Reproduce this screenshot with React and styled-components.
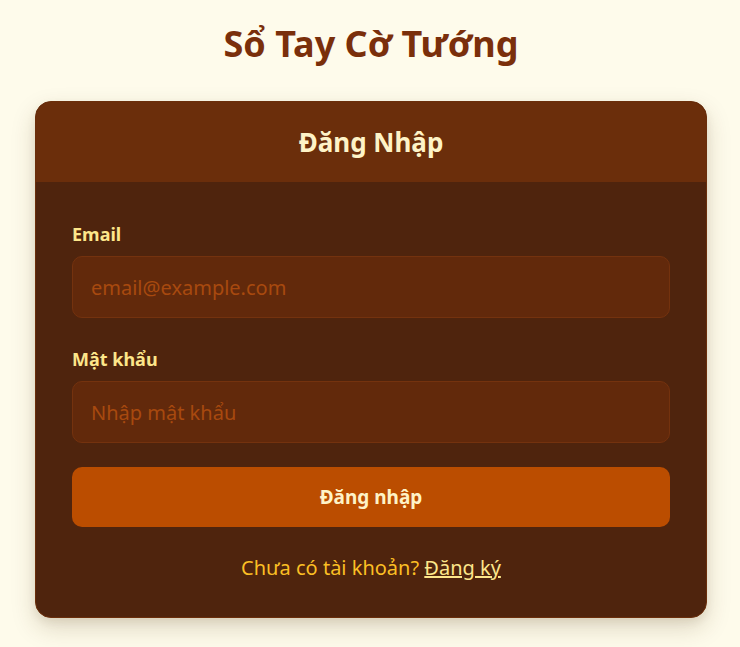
import React from "react";
import styled, { createGlobalStyle } from "styled-components";

const GlobalStyle = createGlobalStyle`
  * { box-sizing: border-box; }
  body {
    margin: 0;
    background: #fefbeb;
    font-family: "Noto Sans", "Open Sans", sans-serif;
  }
`;

const Page = styled.div`
  min-height: 647px;
  padding: 17px 33px 30px 35px;
  display: flex;
  flex-direction: column;
  align-items: center;
`;

const Title = styled.h1`
  margin: 0 0 30px;
  font-size: 36px;
  line-height: 54px;
  font-weight: 700;
  color: #7a2f0b;
`;

const Card = styled.div`
  width: 672px;
  border-radius: 16px;
  overflow: hidden;
  background: #4f240d;
  border: 1px solid #6b2e0b;
  box-shadow: 0 10px 25px rgba(80, 50, 10, 0.18), 0 4px 8px rgba(80, 50, 10, 0.08);
`;

const CardHeader = styled.div`
  height: 80px;
  background: #6b2e0b;
  display: flex;
  align-items: center;
  justify-content: center;
  color: #fef3c7;
  font-size: 26px;
  font-weight: 700;
`;

const Form = styled.form`
  padding: 39px 36px 35px;
  display: flex;
  flex-direction: column;
`;

const Field = styled.div`
  display: flex;
  flex-direction: column;
  gap: 9px;
  margin-bottom: ${(p) => p.$space}px;
`;

const Label = styled.label`
  font-size: 18px;
  line-height: 26px;
  font-weight: 700;
  color: #fde68a;
`;

const Input = styled.input`
  height: 62px;
  padding: 0 18px;
  border-radius: 10px;
  border: 1px solid #74320e;
  background: #62290b;
  color: #fef3c7;
  font: inherit;
  font-size: 20px;
  outline: none;
  &::placeholder {
    color: #a8490f;
  }
`;

const Submit = styled.button`
  height: 60px;
  border: none;
  border-radius: 10px;
  background: #bb4d00;
  color: #fef3c7;
  font: inherit;
  font-size: 19px;
  font-weight: 700;
  cursor: pointer;
`;

const Footer = styled.p`
  margin: 27px 0 0;
  text-align: center;
  font-size: 20px;
  line-height: 28px;
  color: #fbbf24;
`;

const SignupLink = styled.a`
  color: #fde68a;
  text-decoration: underline;
`;

export default function App() {
  return (
    <>
      <GlobalStyle />
      <Page>
        <Title>Sổ Tay Cờ Tướng</Title>
        <Card>
          <CardHeader>Đăng Nhập</CardHeader>
          <Form onSubmit={(e) => e.preventDefault()}>
            <Field $space={28}>
              <Label>Email</Label>
              <Input type="email" placeholder="email@example.com" />
            </Field>
            <Field $space={24}>
              <Label>Mật khẩu</Label>
              <Input type="password" placeholder="Nhập mật khẩu" />
            </Field>
            <Submit type="submit">Đăng nhập</Submit>
            <Footer>
              Chưa có tài khoản? <SignupLink href="#">Đăng ký</SignupLink>
            </Footer>
          </Form>
        </Card>
      </Page>
    </>
  );
}
